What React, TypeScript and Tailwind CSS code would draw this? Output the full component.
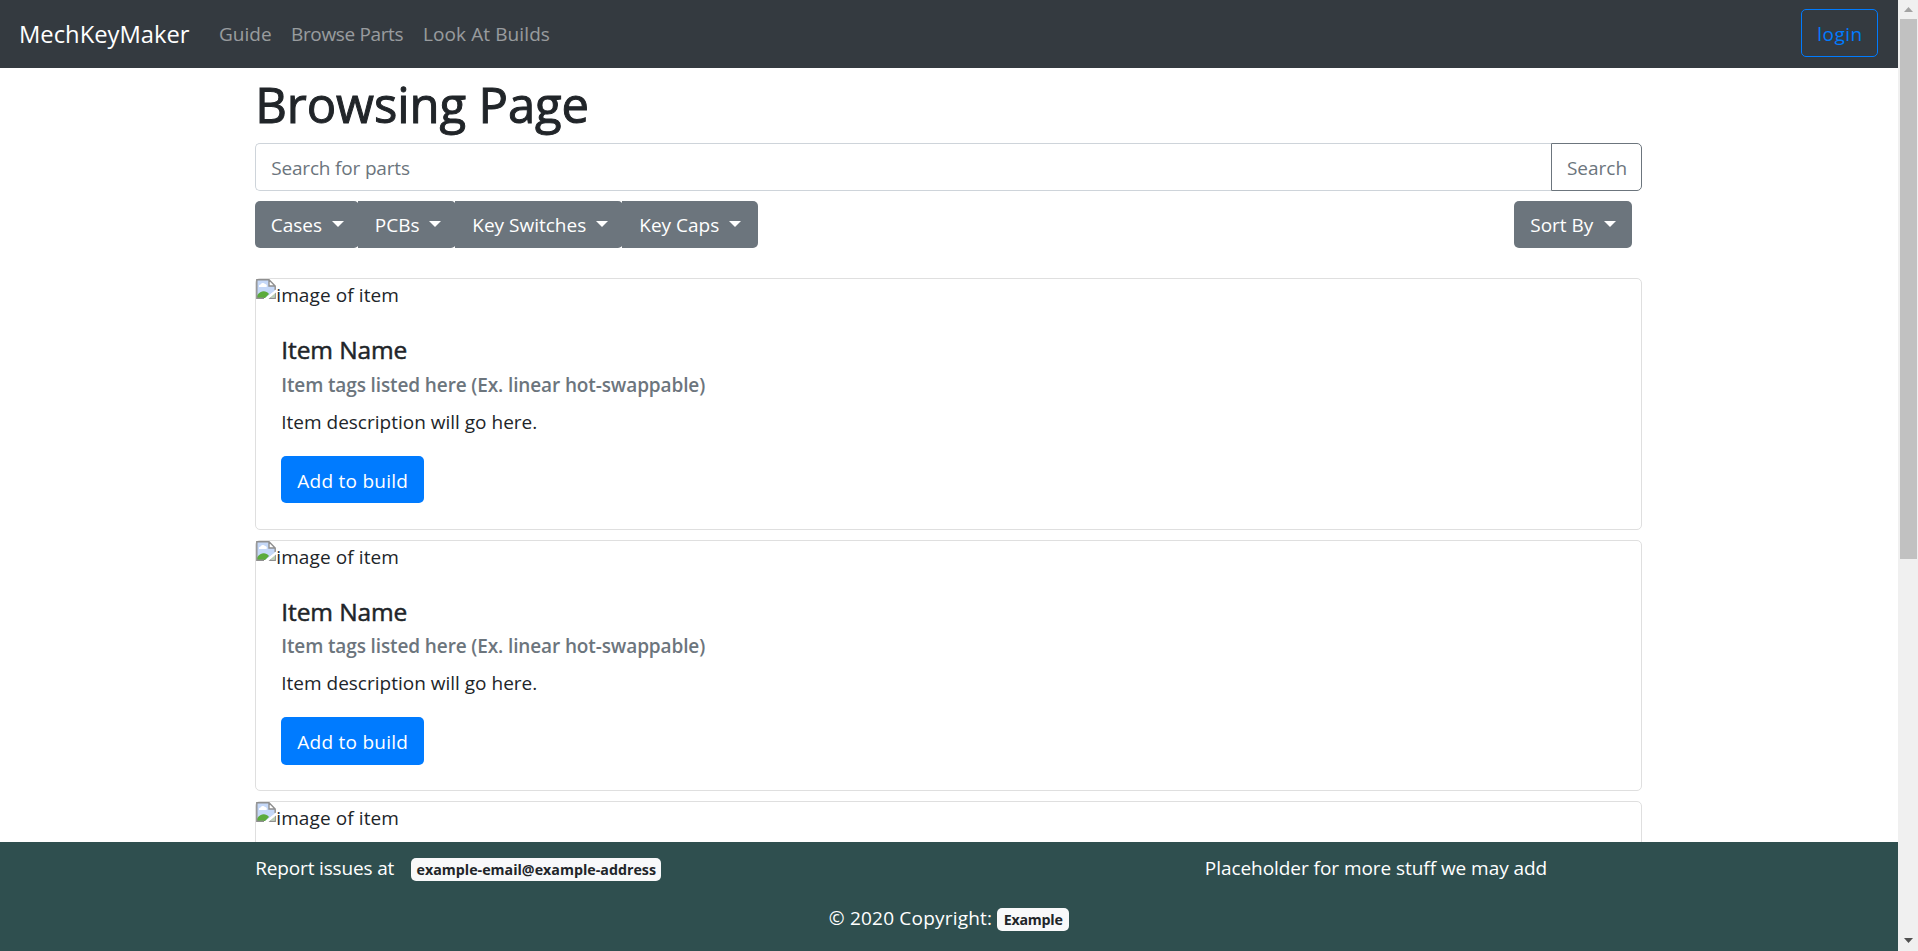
function BrokenImage() {
  return (
    <svg width="20" height="20" viewBox="0 0 20 20" className="shrink-0">
      <path d="M1 1h12l6 6v5L9 19H1z" fill="#c5d8f8" />
      <path d="M3 8a2 2 0 0 1 1.500-2.500A2.600 2.600 0 0 1 9 5a1.900 1.900 0 0 1 1.500 3z" fill="#fff" />
      <path d="M1 19v-2.500c4-5.500 9-5 12-1.500l-4 4z" fill="#5bab3c" />
      <path d="M13 1v6h6z" fill="#fff" />
      <path d="M8 19.200H.8V.8H13l6.200 6.200v4M13 .8V7h6.200M19.200 14v5.200H13z" fill="none" stroke="#8f8f8f" strokeWidth="1.400" />
      <path d="M14 18.500h5V14z" fill="#b9d0b4" />
      <path d="M8.500 20 20 10.500v3L12.500 20z" fill="#fff" />
    </svg>
  );
}

function Caret() {
  return (
    <svg width="12" height="6" viewBox="0 0 12 6" className="mb-0.5 shrink-0">
      <path d="M0 0h12L6 6z" fill="#fff" />
    </svg>
  );
}

function Dropdown({ label, className }: { label: string; className: string }) {
  return (
    <button
      className={`flex h-[47px] items-center justify-between bg-[#6c757d] text-white ${className}`}
    >
      <span className="pt-px">{label}</span>
      <Caret />
    </button>
  );
}

function ItemCard({ collapsed = false }: { collapsed?: boolean }) {
  return (
    <article className="mb-2.5 h-[251.250px] rounded-[5px] border border-[#dfdfdf]">
      <div className="flex h-[30px] items-start">
        <BrokenImage />
        <span className="leading-[33px] tracking-[0.1px]">image of item</span>
      </div>
      {!collapsed && (
        <div className="px-[25px] pt-[25px]">
          <h5 className="h-[37.500px] text-[24.500px] leading-[31px] tracking-[-0.1px] [-webkit-text-stroke:0.5px_#212529]">
            Item Name
          </h5>
          <h6 className="mb-2.5 h-6 leading-[26px] font-semibold tracking-[-0.120px] text-[#6c757d]">
            Item tags listed here (Ex. linear hot-swappable)
          </h6>
          <p className="mb-5 h-[30px] leading-8">Item description will go here.</p>
          <button className="h-[47.500px] w-[143px] rounded-[5px] bg-[#007bff] pt-[3px] tracking-[0.250px] text-white">
            Add to build
          </button>
        </div>
      )}
    </article>
  );
}

function Scrollbar() {
  return (
    <div className="flex w-5 shrink-0 flex-col items-center bg-[#f0f0f0]">
      <svg width="9" height="5" viewBox="0 0 9 5" className="mt-[7px] mb-[7px]">
        <path d="M0 5h9L4.500 0z" fill="#a3a3a3" />
      </svg>
      <div className="h-[540px] w-[17px] bg-[#c1c1c1]" />
      <svg width="9" height="5" viewBox="0 0 9 5" className="mt-auto mb-2">
        <path d="M0 0h9L4.500 5z" fill="#505050" />
      </svg>
    </div>
  );
}

export default function App() {
  return (
    <div className="flex h-[951px] w-full overflow-hidden bg-white font-['Open_Sans','Noto_Sans',sans-serif] text-[19px] text-[#212529]">
      <div className="flex min-w-0 flex-1 flex-col">
        <nav className="flex h-[68px] shrink-0 items-center bg-[#343a40] pr-5 pl-[19px]">
          <a className="mr-[30px] w-[170px] pt-0.5 text-[23.750px] whitespace-nowrap text-white">MechKeyMaker</a>
          <div className="flex text-white/50">
            <a className="w-[72px]">Guide</a>
            <a className="w-[132px] tracking-[-0.350px]">Browse Parts</a>
            <a className="tracking-[0.1px]">Look At Builds</a>
          </div>
          <button className="mb-0.5 ml-auto h-12 w-[77px] rounded-[5px] border border-[#007bff] pt-0.5 pl-px tracking-[0.5px] text-[#007bff]">
            login
          </button>
        </nav>

        <main className="min-h-0 flex-1 overflow-hidden">
          <div className="ml-[255.250px] w-[1387px]">
            <h1 className="mb-[9px] pt-1.5 text-[49px] leading-[60px] tracking-[-0.1px] [-webkit-text-stroke:1px_#212529]">
              Browsing Page
            </h1>
            <div className="mb-2.5 flex h-12">
              <input
                placeholder="Search for parts"
                className="min-w-0 flex-1 rounded-l-[5px] border border-r-0 border-[#ced4da] px-[15px] pt-0.5 tracking-[-0.180px] placeholder:text-[#6c757d]"
              />
              <button className="w-[91.500px] rounded-r-[5px] border border-[#6c757d] pt-0.5 pl-px text-[#6c757d]">Search</button>
            </div>
            <div className="mb-[30.250px] flex">
              <Dropdown label="Cases" className="w-[104px] rounded-[5px] pr-[15px] pl-[15.500px]" />
              <Dropdown label="PCBs" className="-ml-px w-[98px] rounded-r-[5px] pr-[15px] pl-[16.500px]" />
              <Dropdown label="Key Switches" className="-ml-px w-[168px] rounded-r-[5px] pr-[15px] pl-[17px]" />
              <Dropdown label="Key Caps" className="-ml-px w-[136px] rounded-r-[5px] pr-[17px] pl-[17px]" />
              <Dropdown label="Sort By" className="mr-2.5 ml-auto w-[118px] rounded-[5px] pr-4 pl-4" />
            </div>
            <ItemCard />
            <ItemCard />
            <ItemCard collapsed />
          </div>
        </main>

        <footer className="h-[109px] shrink-0 bg-[#2f4f4f] text-white">
          <div className="ml-[255.250px] flex w-[1387.500px] items-baseline pt-[11px] leading-[30px]">
            <span className="w-[156px] tracking-[-0.160px]">Report issues at</span>
            <span className="h-[23px] w-[250px] rounded-[5px] bg-[#f8f9fa] text-center text-[14.250px] leading-[23px] font-bold text-[#212529]">
              example-email@example-address
            </span>
            <span className="ml-auto w-[438px] tracking-[-0.050px]">Placeholder for more stuff we may add</span>
          </div>
          <div className="flex items-baseline justify-center pt-5 leading-[30px]">
            <span className="mr-[5px] tracking-[0.2px]">© 2020 Copyright:</span>
            <span className="h-[23px] w-[72px] rounded-[5px] bg-[#f8f9fa] text-center text-[14.250px] leading-[23px] font-bold tracking-[-0.250px] text-[#212529]">
              Example
            </span>
          </div>
        </footer>
      </div>
      <Scrollbar />
    </div>
  );
}
